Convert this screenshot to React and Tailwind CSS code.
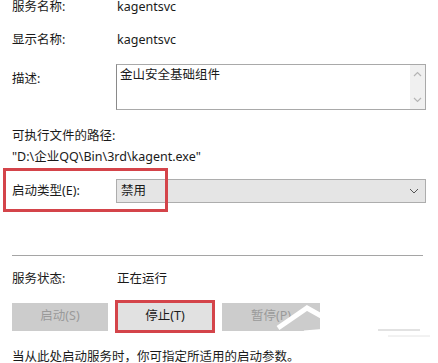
import React from 'react';

const font = { fontFamily: '"Noto Sans", "Noto Sans CJK SC", sans-serif' };

const Row = ({ label, children, className = '' }) => (
  <div className={`flex items-center h-[14px] leading-[14px] ${className}`}>
    <div className="w-[105px] shrink-0">{label}</div>
    <div>{children}</div>
  </div>
);

const Watermark = () => (
  // logo watermark lying over the buttons
  <svg className="absolute left-[270px] top-[296px] pointer-events-none" width="168" height="60" viewBox="0 0 168 60">
    <path d="M8 32 L37 12 L62 26" stroke="#fff" strokeWidth="5" fill="none" strokeLinejoin="miter" />
    <path d="M20 38 L30 38 M18 46 L28 46 M34 36 L58 34 M32 44 L56 42 M30 52 L50 50" stroke="#fff" strokeWidth="3" fill="none" />
    <rect x="60" y="0" width="108" height="60" fill="#fff" opacity="0.7" />
    <path d="M108 34 L150 34" stroke="#d8d8d8" strokeWidth="1.5" />
    <path d="M118 40 L160 40" stroke="#e4e4e4" strokeWidth="1" />
  </svg>
);

export default function App() {
  return (
    <div className="relative w-[438px] h-[363px] bg-white overflow-hidden text-[12.5px] text-[#1a1a1a] px-[12px]" style={font}>
      <Row label="服务名称:" className="mt-0">kagentsvc</Row>
      <Row label="显示名称:" className="mt-[19px]">kagentsvc</Row>

      <div className="flex mt-[17px]">
        <div className="w-[104px] shrink-0 pt-[8px] leading-[14px]">描述:</div>
        <div className="flex w-[312px] h-[46px] border border-[#a9a9a9] border-l-[#8a8a8a] bg-white">
          <div className="flex-1 px-[3px] pt-[2px] leading-[16px]">金山安全基础组件</div>
          <div className="w-[15px] bg-[#f0f0f0] flex flex-col items-center justify-between py-[6px] text-[#b5b5b5]">
            <svg width="9" height="6" viewBox="0 0 9 6"><path d="M1 5 L4.5 1.5 L8 5" stroke="currentColor" strokeWidth="1.2" fill="none" /></svg>
            <svg width="9" height="6" viewBox="0 0 9 6"><path d="M1 1 L4.5 4.5 L8 1" stroke="currentColor" strokeWidth="1.2" fill="none" /></svg>
          </div>
        </div>
      </div>

      <div className="mt-[19px] leading-[14px]">可执行文件的路径:</div>
      <div className="mt-[7px] leading-[14px]">"D:\企业QQ\Bin\3rd\kagent.exe"</div>

      <div className="relative flex items-center mt-[15px] h-[24px]">
        <div className="w-[104px] shrink-0 leading-[14px]">启动类型(E):</div>
        <div className="flex items-center justify-between w-[312px] h-[24px] border border-[#adadad] bg-[#e5e5e5] pl-[4px] pr-[6px]">
          <span>禁用</span>
          <svg width="10" height="6" viewBox="0 0 10 6"><path d="M1 1 L5 5 L9 1" stroke="#555" strokeWidth="1" fill="none" /></svg>
        </div>
        <div className="absolute left-[-9px] top-[-11px] w-[165px] h-[44px] border-[3px] border-[#d4444a]" />
      </div>

      <div className="mt-[52px] h-px w-[411px] bg-[#a5a5a5]" />

      <Row label="服务状态:" className="mt-[16px]">正在运行</Row>

      <div className="flex items-center mt-[14px] h-[33px]">
        <div className="w-[96px] h-[28px] bg-[#cccccc] text-[#9a9a9a] flex items-center justify-center">启动(S)</div>
        <div className="ml-[7px] w-[100px] h-[33px] border-[3px] border-[#d4444a] bg-[#e1e1e1] flex items-center justify-center">停止(T)</div>
        <div className="ml-[7px] w-[98px] h-[28px] bg-[#cccccc] text-[#9a9a9a] flex items-center justify-center">暂停(P)</div>
      </div>

      <div className="mt-[17px] leading-[14px]">当从此处启动服务时，你可指定所适用的启动参数。</div>

      <Watermark />
    </div>
  );
}
